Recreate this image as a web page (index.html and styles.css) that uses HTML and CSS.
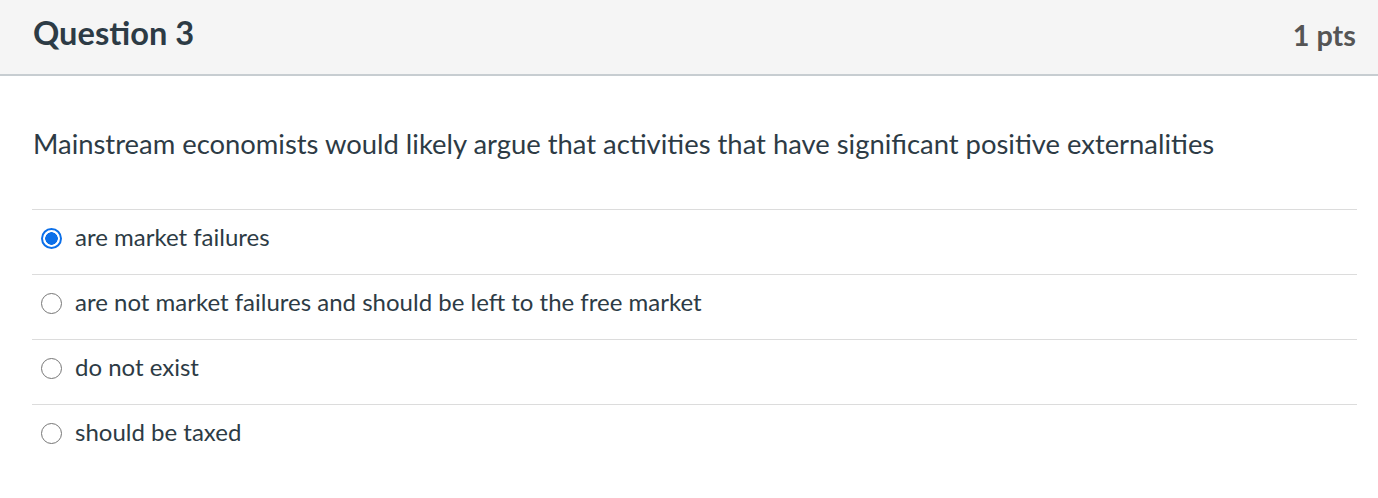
FILE: index.html
```html
<!DOCTYPE html>
<html>
  <head>
    <meta charset="utf-8">
    <title>Question 3</title>
    <link rel="stylesheet" href="styles.css">
  </head>
  <body>
    <div class="question">
      <div class="header">
        <div class="name">Question 3</div>
        <div class="points">1 pts</div>
      </div>

      <div class="text">
        Mainstream economists would likely argue that activities that have significant positive externalities
      </div>

      <div class="answers">
        <label class="answer">
          <span class="radio checked"></span>
          <span class="label">are market failures</span>
        </label>
        <label class="answer">
          <span class="radio"></span>
          <span class="label">are not market failures and should be left to the free market</span>
        </label>
        <label class="answer">
          <span class="radio"></span>
          <span class="label">do not exist</span>
        </label>
        <label class="answer">
          <span class="radio"></span>
          <span class="label">should be taxed</span>
        </label>
      </div>
    </div>
  </body>
</html>
```

FILE: styles.css
```css
* {
  margin: 0;
  padding: 0;
  box-sizing: border-box;
}

body {
  background: #fff;
  font-family: Lato, "Open Sans", sans-serif;
  color: #2d3b45;
}

.header {
  display: flex;
  justify-content: space-between;
  align-items: center;
  height: 76px;
  padding: 0 22px 10px 33px;
  background: #f5f5f5;
  border-bottom: 2px solid #c7cdd1;
}

.name {
  font-size: 32.6px;
  font-weight: bold;
}

.points {
  font-size: 28.8px;
  font-weight: bold;
  color: #555;
  padding-top: 6px;
}

.text {
  padding: 51px 33px 49px;
  font-size: 27.4px;
}

.answers {
  margin: 0 21px 0 32px;
}

.answer {
  display: flex;
  align-items: center;
  gap: 13px;
  height: 65px;
  padding: 0 0 12px 9px;
  border-top: 1px solid #dcdcdc;
  font-size: 24px;
}

.radio {
  width: 21px;
  height: 21px;
  border-radius: 50%;
  border: 1.5px solid #767676;
  flex-shrink: 0;
  margin-top: 4px;
}

.radio.checked {
  border: 2px solid #0b6fe9;
  background: radial-gradient(circle, #0b6fe9 0 6px, #fff 6.5px);
}
```
